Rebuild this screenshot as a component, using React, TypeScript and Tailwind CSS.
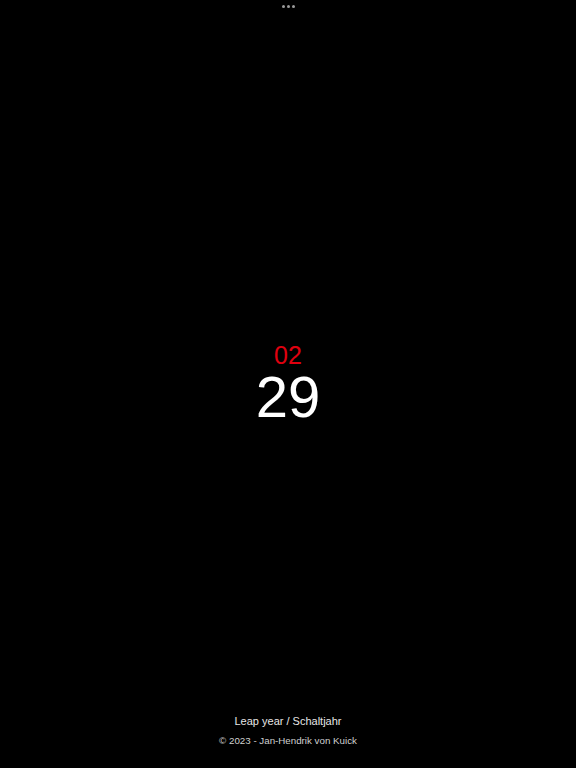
export default function App() {
  return (
    <div
      className="h-[768px] w-full bg-black flex flex-col items-center"
      style={{ fontFamily: '"Liberation Sans", Arial, sans-serif' }}
    >
      <div className="flex gap-[2px] pt-[5px]">
        <span className="w-[3px] h-[3px] rounded-full bg-[#9a9a9a]" />
        <span className="w-[3px] h-[3px] rounded-full bg-[#9a9a9a]" />
        <span className="w-[3px] h-[3px] rounded-full bg-[#9a9a9a]" />
      </div>
      <div className="flex-1 flex flex-col items-center justify-center pt-[45px]">
        <div className="text-[25px] leading-none text-[#e0000f]">02</div>
        <div className="text-[58px] leading-none text-white">29</div>
      </div>
      <div className="flex flex-col items-center pb-[22px]">
        <div className="text-[11px] text-[#e6e6e6] leading-none">Leap year / Schaltjahr</div>
        <div className="text-[9.75px] text-[#d0d0d0] leading-none mt-[9px]">© 2023 - Jan-Hendrik von Kuick</div>
      </div>
    </div>
  )
}
